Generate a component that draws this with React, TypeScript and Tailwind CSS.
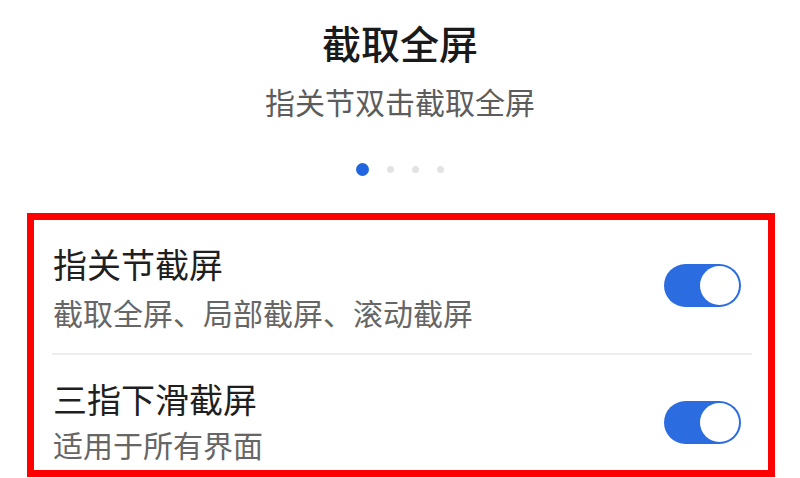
import React from "react";

const font = { fontFamily: '"Noto Sans CJK SC", "Noto Sans", sans-serif' };

function Toggle() {
  return (
    <div className="flex h-[43px] w-[77px] items-center justify-end rounded-full bg-[#2b6de0] p-[2px]">
      <div className="h-[39px] w-[39px] rounded-full bg-white" />
    </div>
  );
}

export default function App() {
  return (
    <div className="flex h-[478px] w-[800px] flex-col items-center overflow-hidden bg-white" style={font}>
      <div className="mt-[19px] text-[39px] font-medium leading-[46px] text-[#1a1a1a]">截取全屏</div>
      <div className="mt-[18px] text-[30px] leading-[36px] text-[#5c5c5c]">指关节双击截取全屏</div>
      <div className="mt-[44px] flex items-center gap-[18px]">
        <div className="h-[13px] w-[13px] rounded-full bg-[#2166e0]" />
        <div className="h-[7px] w-[7px] rounded-full bg-[#e3e3e3]" />
        <div className="h-[7px] w-[7px] rounded-full bg-[#e3e3e3]" />
        <div className="h-[7px] w-[7px] rounded-full bg-[#e3e3e3]" />
      </div>
      <div className="mt-[37px] ml-[2px] flex h-[264px] w-[748px] shrink-0 flex-col border-[7px] border-[#ff0000] bg-white">
        <div className="flex h-[133px] shrink-0 items-start justify-between pl-[19px] pr-[27px] pt-[24px]">
          <div className="flex flex-col">
            <div className="text-[34px] leading-[40px] text-[#1f1f1f]">指关节截屏</div>
            <div className="mt-[10px] text-[30px] leading-[36px] text-[#666666]">截取全屏、局部截屏、滚动截屏</div>
          </div>
          <div className="mt-[20px]">
            <Toggle />
          </div>
        </div>
        <div className="ml-[18px] mr-[16px] h-[2px] shrink-0 bg-[#eeeeee]" />
        <div className="flex flex-1 items-start justify-between pl-[19px] pr-[27px] pt-[24px]">
          <div className="flex flex-col">
            <div className="text-[34px] leading-[40px] text-[#1f1f1f]">三指下滑截屏</div>
            <div className="mt-[7px] text-[30px] leading-[36px] text-[#666666]">适用于所有界面</div>
          </div>
          <div className="mt-[22px]">
            <Toggle />
          </div>
        </div>
      </div>
    </div>
  );
}
